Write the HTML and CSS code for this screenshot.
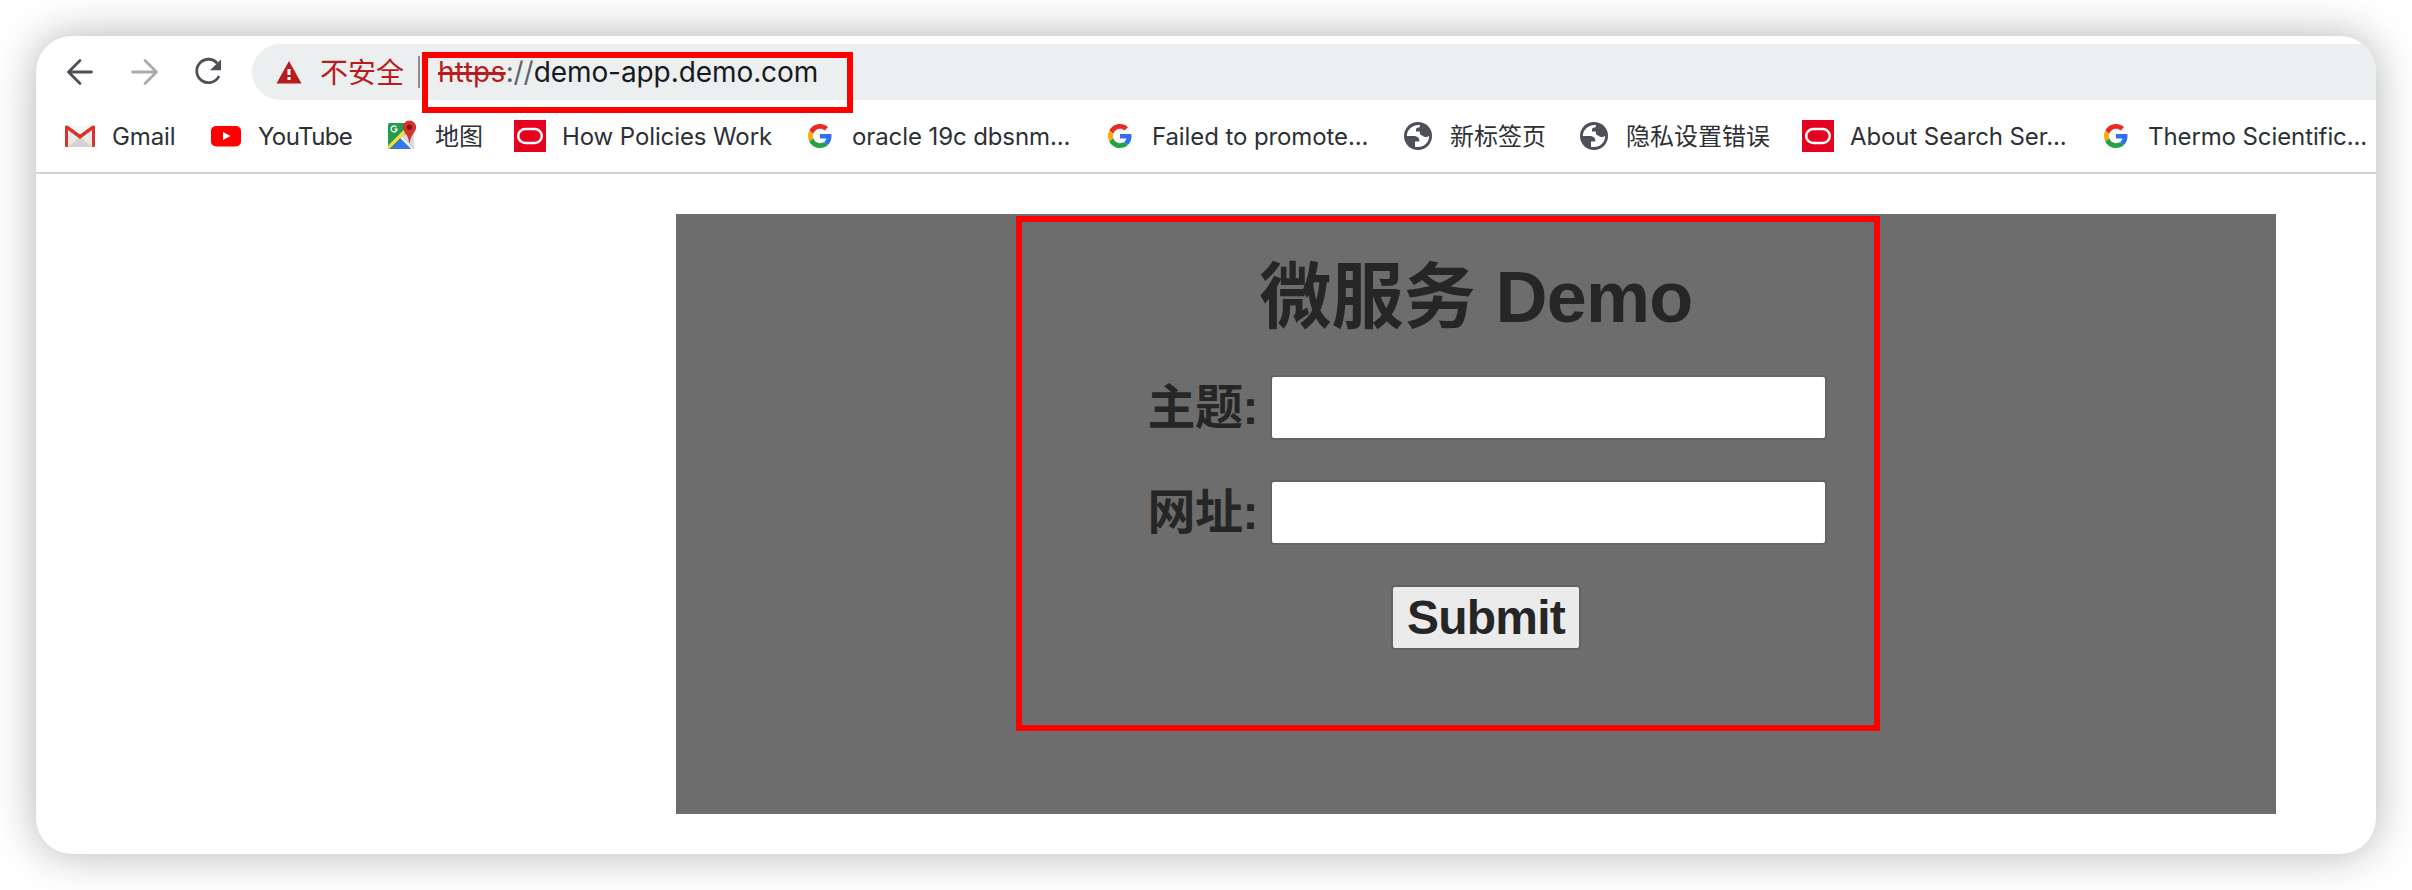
FILE: index.html
```html
<!DOCTYPE html>
<html lang="zh-CN">
<head>
<meta charset="utf-8">
<title>微服务 Demo</title>
<link rel="stylesheet" href="styles.css">
</head>
<body>
<svg class="defs" width="0" height="0" aria-hidden="true">
  <symbol id="google" viewBox="0 0 48 48">
    <path fill="#e52d27" d="M24 9.5c3.54 0 6.71 1.22 9.21 3.6l6.85-6.85C35.9 2.38 30.47 0 24 0 14.62 0 6.51 5.38 2.56 13.22l7.98 6.19C12.43 13.72 17.74 9.5 24 9.5z"/>
    <path fill="#2f6df6" d="M46.98 24.55c0-1.57-.15-3.09-.38-4.55H24v9.02h12.94c-.58 2.96-2.26 5.48-4.78 7.18l7.73 6c4.51-4.18 7.09-10.36 7.09-17.65z"/>
    <path fill="#f9ab06" d="M10.53 28.59c-.48-1.45-.76-2.99-.76-4.59s.27-3.14.76-4.59l-7.98-6.19C.92 16.46 0 20.12 0 24c0 3.88.92 7.54 2.56 10.78l7.97-6.19z"/>
    <path fill="#28a143" d="M24 48c6.48 0 11.93-2.13 15.89-5.81l-7.73-6c-2.15 1.45-4.92 2.3-8.16 2.3-6.26 0-11.57-4.22-13.47-9.91l-7.98 6.19C6.51 42.62 14.62 48 24 48z"/>
  </symbol>
  <symbol id="oracle" viewBox="0 0 32 32">
    <path fill="#e6001f" d="M0 0h32v32H0z"/>
    <rect x="4.2" y="9" width="23.6" height="14" rx="7" fill="none" stroke="#fff" stroke-width="2.5"/>
  </symbol>
  <symbol id="globe" viewBox="0 0 28 28">
    <circle cx="14" cy="14" r="14" fill="#4d5157"/>
    <path fill="#fff" d="M16 3C9 2 2.800 7.500 2.900 14H9.500C13 14 15.300 15.500 15.300 18.500V19.500H11V24.700C18.500 26.500 25.300 21 25.200 13.700C24 14.800 22 15.300 20 14.700C18.800 14.200 18.600 13.200 16.500 13C15.500 12 16 9.800 16 9.500H12V7.500C12 6 13.500 5.500 15.500 5.500Z"/>
  </symbol>
</svg>

<main class="window">
  <header class="toolbar">
    <nav class="nav">
      <svg class="nav-icon" viewBox="0 0 32 32"><path d="M27.500 16H5M16 4.500 4.500 16 16 27.500"/></svg>
      <svg class="nav-icon nav-icon-off" viewBox="0 0 32 32"><path d="M4.500 16H28M17 4.500 28.500 16 17 27.500"/></svg>
      <svg class="nav-icon" viewBox="0 0 32 32"><path class="arc" d="M25.200 7.200A11.700 11.700 0 1 0 27 20"/><path class="tip" d="M29 3.500V14.300H18z"/></svg>
    </nav>
    <div class="omnibox">
      <svg class="warn" width="26" height="23" viewBox="0 0 26 23"><path fill="#b91c1c" d="M13 0 25.500 22.500H.5z"/><path fill="#fff" d="M11.500 8h3v6h-3zM11.500 16h3v3h-3z"/></svg>
      <span class="insecure">不安全</span>
      <span class="divider"></span>
      <span class="url"><s class="scheme">https</s><span class="slashes">://</span>demo-app.demo.com</span>
    </div>
    <div class="mark mark-url"></div>
  </header>

  <nav class="bookmarks">
    <a class="bm w-gmail"><svg class="ico" viewBox="0 0 32 32"><path fill="#e9e9e9" d="M2 6h28v21H2z"/><path fill="#d2d2d2" d="m4 27 12-10 12 10z"/><path fill="#f7f7f7" d="M4 6h24L16 15z"/><path fill="#d8322c" d="M1 7q0-2 2.500-1.500L16 14.500 28.500 5.500Q31 5 31 7v18.500Q31 27 29.500 27H28V10L16 19 4 10v17H2.500Q1 27 1 25.500z"/></svg>Gmail</a>
    <a class="bm w-youtube"><svg class="ico" viewBox="0 0 32 32"><rect x="1" y="6" width="30" height="20.500" rx="5" fill="#f00"/><path fill="#fff" d="m13 12 7.500 4-7.500 4z"/></svg><span class="tight">YouTube</span></a>
    <a class="bm w-maps"><svg class="ico" viewBox="0 0 32 32"><clipPath id="tile"><rect x="1" y="3" width="26" height="26" rx="2"/></clipPath><g clip-path="url(#tile)"><path fill="#259b50" d="M1 3h26v26H1z"/><path fill="#dcdcdc" d="M28 8v21L15 16z"/><path fill="#3b74f0" d="m3 30 11.500-12L25 30z"/><path stroke="#fddc3d" stroke-width="3.200" d="M0 29 19 10"/><path stroke="#f4f4f4" stroke-width="2.500" d="m14 17 14 14"/></g><path fill="none" stroke="#fff" stroke-width="1.300" d="M9.500 7.200A2.900 2.900 0 1 0 10 9.200H7.500"/><path fill="#d4322c" d="M22.500.5a6.600 6.600 0 0 1 6.600 6.700c0 5-5.300 6.500-6.200 15.300h-.8C21.200 13.700 15.900 12.200 15.900 7.200A6.600 6.600 0 0 1 22.500.5z"/><circle cx="22.500" cy="7.200" r="2.600" fill="#761917"/></svg><span class="cjk">地图</span></a>
    <a class="bm w-policies"><svg class="ico"><use href="#oracle"/></svg>How Policies Work</a>
    <a class="bm w-oracle19"><svg class="ico ico-g"><use href="#google"/></svg>oracle 19c dbsnm...</a>
    <a class="bm w-failed"><svg class="ico ico-g"><use href="#google"/></svg>Failed to promote...</a>
    <a class="bm w-newtab"><svg class="ico ico-globe"><use href="#globe"/></svg><span class="cjk">新标签页</span></a>
    <a class="bm w-privacy"><svg class="ico ico-globe"><use href="#globe"/></svg><span class="cjk">隐私设置错误</span></a>
    <a class="bm w-search"><svg class="ico"><use href="#oracle"/></svg>About Search Ser...</a>
    <a class="bm"><svg class="ico ico-g"><use href="#google"/></svg>Thermo Scientific...</a>
  </nav>

  <section class="page">
    <form class="panel">
      <h1 class="title">微服务 <span class="title-latin">Demo</span></h1>
      <label class="row"><span class="label">主题:</span><input class="field" type="text"></label>
      <label class="row"><span class="label">网址:</span><input class="field" type="text"></label>
      <button class="submit" type="button">Submit</button>
      <div class="mark mark-form"></div>
    </form>
  </section>
</main>
</body>
</html>
```
FILE: styles.css
```css
* { box-sizing: border-box; }
body {
  margin: 0;
  height: 890px;
  padding: 36px;
  background: #fff;
  overflow: hidden;
  font-family: Inter, "Noto Sans CJK SC", sans-serif;
}
.defs { position: absolute; }
.window {
  height: 818px;
  border-radius: 36px;
  background: #fff;
  overflow: hidden;
  box-shadow: 0 0 44px rgba(0, 0, 0, .3);
}

/* Toolbar */
.toolbar {
  position: relative;
  display: flex;
  height: 64px;
  padding: 8px 0 0 28px;
}
.nav { display: flex; align-items: center; gap: 32px; width: 188px; }
.nav-icon {
  width: 32px;
  height: 32px;
  fill: none;
  stroke: #4d5157;
  stroke-width: 2.8;
  stroke-linecap: round;
  stroke-linejoin: round;
}
.nav-icon-off { stroke: #a9acaf; }
.arc { stroke-linecap: butt; }
.tip { fill: #4d5157; stroke: none; }
.omnibox {
  flex: 1;
  display: flex;
  align-items: center;
  height: 56px;
  padding-left: 24px;
  border-radius: 28px 0 0 28px;
  background: #ebeff0;
  font-size: 28px;
  white-space: nowrap;
}
.insecure { width: 82px; margin-left: 18px; padding-bottom: 2px; color: #b91c1c; }
.divider { width: 2px; height: 32px; margin: 0 18px 0 16px; background: #8d9093; }
.url { color: #17191c; letter-spacing: -.08px; }
.scheme { color: #b91c1c; letter-spacing: .3px; text-decoration-thickness: 3px; }
.slashes { color: #5f6368; }

/* Bookmarks */
.bookmarks {
  display: flex;
  align-items: center;
  height: 74px;
  padding-left: 28px;
  border-bottom: 2px solid #d2d3d4;
  color: #2d3034;
  font-size: 24px;
  letter-spacing: -.1px;
  white-space: nowrap;
}
.bm { flex: none; display: flex; align-items: center; gap: 16px; }
.tight { letter-spacing: -.6px; }
.cjk { padding-bottom: 3px; letter-spacing: 0; }
.ico { flex: none; width: 32px; height: 32px; }
.ico-g { padding: 4px; }
.ico-globe { padding: 2px; }
.w-gmail { width: 146px; }
.w-youtube { width: 177px; }
.w-maps { width: 127px; }
.w-policies { width: 290px; }
.w-oracle19 { width: 300px; }
.w-failed { width: 298px; }
.w-newtab { width: 176px; }
.w-privacy { width: 224px; }
.w-search { width: 298px; }

/* Page */
.page { padding: 40px 100px 0 640px; }
.panel {
  position: relative;
  display: flex;
  flex-direction: column;
  align-items: center;
  height: 600px;
  padding-top: 43px;
  background: #6d6d6d;
  color: #262626;
  font-family: "Liberation Sans", "Noto Sans CJK SC", sans-serif;
  font-size: 48px;
  font-weight: 700;
}
.title { margin: 0 0 38px; height: 80px; font-size: 72px; line-height: 80px; white-space: nowrap; }
.title-latin { letter-spacing: -.8px; }
.row { display: flex; align-items: center; height: 65px; margin: 0 0 40px 22px; }
.label { width: 122px; line-height: 65px; letter-spacing: -.5px; white-space: nowrap; }
.field, .submit {
  height: 65px;
  border: 2px solid #636363;
  border-radius: 4px;
  font: inherit;
  color: inherit;
}
.field { width: 557px; background: #fff; }
.submit {
  width: 190px;
  margin-left: 20px;
  padding: 0;
  background: #ebebeb;
  letter-spacing: -.8px;
  line-height: 60px;
}

/* Highlight frames laid over the content */
.mark { position: absolute; border: 6px solid #f00; pointer-events: none; }
.mark-url { left: 386px; top: 16px; width: 431px; height: 61px; }
.mark-form { left: 340px; top: 2px; width: 864px; height: 515px; }
```
